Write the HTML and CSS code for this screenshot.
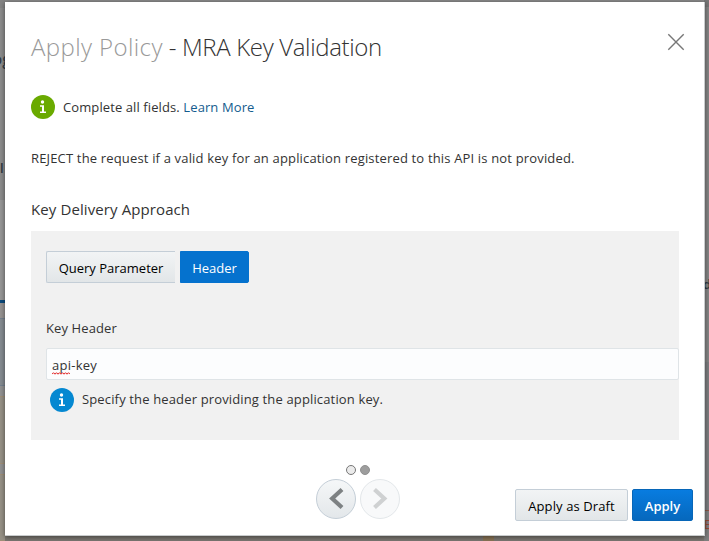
FILE: index.html
```html
<!DOCTYPE html>
<html lang="en">
<head>
<meta charset="utf-8">
<title>Apply Policy</title>
<link rel="stylesheet" href="styles.css">
</head>
<body>
<div class="page">
  <div class="rail rail-left">
    <div class="band top"></div><div class="band head"></div><div class="band upper"></div><div class="band line"></div>
    <div class="band gap"></div><div class="band blue"></div><div class="band gap2"></div><div class="band sand"></div><div class="band gap3"></div><div class="band sand last"></div>
  </div>
  <div class="floor"><span class="floor-accent"></span></div>
  <div class="rail rail-right"><div class="right-top"></div><div class="right-mid"></div><div class="right-low"></div><div class="right-end"></div></div>
</div>
<span class="behind og">og</span>
<span class="behind ol">ol</span>
<span class="behind dd">d</span>
<span class="behind ee">E</span>
<main class="dialog">
  <header class="head-row">
    <h1 class="title"><span class="muted">Apply Policy</span> <span class="name">- MRA Key Validation</span></h1>
    <svg class="close" width="18" height="18" viewBox="0 0 18 18"><path d="M1.3 1.3 16.7 16.7M16.7 1.3 1.3 16.7" stroke="#777" stroke-width="1.4" fill="none"/></svg>
  </header>
  <div class="notice">
    <svg width="24" height="24" viewBox="0 0 24 24"><circle cx="12" cy="12" r="12" fill="#6aaa00"/><circle cx="11.5" cy="7" r="1.7" fill="#fff"/><path d="M9 10.2h4v6.2h2V18H9v-1.6h2v-4.6H9z" fill="#fff"/></svg>
    <p class="notice-text">Complete all fields. <a class="link">Learn More</a></p>
  </div>
  <p class="description">REJECT the request if a valid key for an application registered to this API is not provided.</p>
  <h2 class="section-title">Key Delivery Approach</h2>
  <section class="panel">
    <div class="toggle">
      <button class="btn query">Query Parameter</button>
      <button class="btn selected">Header</button>
    </div>
    <label class="label">Key Header</label>
    <div class="input"><span class="misspelled">api<svg class="squiggle" width="18" height="3" viewBox="0 0 18 3"><path d="M0 2.2 1.5.7 3 2.2 4.5.7 6 2.2 7.5.7 9 2.2 10.5.7 12 2.2 13.5.7 15 2.2 16.5.7 18 2.2" fill="none" stroke="#e01818"/></svg></span><span>-key</span></div>
    <div class="hint">
      <svg width="24" height="24" viewBox="0 0 24 24"><circle cx="12" cy="12" r="12" fill="#0588d1"/><circle cx="11.5" cy="7" r="1.7" fill="#fff"/><path d="M9 10.2h4v6.2h2V18H9v-1.6h2v-4.6H9z" fill="#fff"/></svg>
      <p class="hint-text">Specify the header providing the application key.</p>
    </div>
  </section>
  <footer class="footer">
    <div class="pager">
      <div class="dots"><i class="dot"></i><i class="dot on"></i></div>
      <div class="arrows">
        <span class="arrow"><svg width="38" height="38" viewBox="0 0 38 38"><path d="M25 9.5 15.2 18.5 25 27.5" fill="none" stroke="#7d8183" stroke-width="4.2"/></svg></span>
        <span class="arrow off"><svg width="38" height="38" viewBox="0 0 38 38"><path d="M13.5 9.5 23.3 18.5 13.5 27.5" fill="none" stroke="#cfd1d2" stroke-width="4.2"/></svg></span>
      </div>
    </div>
    <div class="actions">
      <button class="btn draft">Apply as Draft</button>
      <button class="btn apply">Apply</button>
    </div>
  </footer>
</main>
</body>
</html>
```
FILE: styles.css
```css
* { box-sizing: border-box; }
body { margin: 0; width: 709px; height: 541px; overflow: hidden; background: #8b8b8b; font-family: "Open Sans", "Noto Sans", sans-serif; font-size: 13px; color: #333; }
h1, h2, p { margin: 0; font-weight: 400; white-space: nowrap; }
.page { display: grid; grid-template-columns: 5px 1fr 5px; height: 541px; }
.rail { display: flex; flex-direction: column; }
.band { flex: none; }
.top { height: 8px; background: #858585; }
.head { height: 192px; background: #8c8c8c; }
.upper { height: 100px; background: #969696; }
.line { height: 3px; background: #0b4a7c; }
.gap { height: 15px; background: #969392; }
.blue { height: 68px; background: #858b91; border: solid #74818f; border-width: 1px 0; }
.gap2 { height: 10px; background: #929292; }
.sand { height: 68px; background: #969186; border: solid #a08f78; border-width: 1px 0; }
.gap3 { height: 10px; background: #929292; }
.last { height: 67px; }
.floor { align-self: end; height: 5px; background: #7b7771; display: flex; justify-content: flex-end; padding-right: 210px; }
.floor-accent { width: 11px; background: #887356; }
.right-top { height: 7px; background: #777; }
.right-mid { height: 355px; background: #858585; }
.right-low { height: 149px; background: #7e7e80; border-bottom: 1px solid #8b5948; }
.right-end { flex: 1; background: #808080; }
.behind { position: absolute; color: #303942; line-height: 20px; }
.og { left: -8px; top: 49px; font-size: 17px; }
.ol { left: -8px; top: 158px; font-weight: 600; }
.dd { left: 703px; top: 274px; font-weight: 600; }
.ee { left: 704px; top: 514px; color: #984b35; }
.dialog { position: absolute; left: 5px; top: 2px; width: 700px; height: 534px; padding: 0 12px 0 26px; background: #fff; border: solid #c9cccd; border-width: 0 1px 1px 0; box-shadow: 0 1px 5px rgba(0,0,0,.5); display: flex; flex-direction: column; }
.head-row { display: flex; justify-content: space-between; padding: 27px 7px 0 0; height: 93px; }
.title { font-size: 24px; line-height: 36px; font-weight: 300; letter-spacing: -.35px; }
.muted { color: #999; letter-spacing: .4px; }
.close { margin-top: 4px; }
.notice { display: flex; align-items: center; gap: 8px; height: 24px; letter-spacing: .1px; }
.link { color: #145c8e; }
.description { margin-top: 27px; line-height: 24px; letter-spacing: .165px; }
.section-title { margin-top: 27px; font-size: 15px; line-height: 24px; letter-spacing: .1px; }
.panel { margin-top: 10px; width: 648px; height: 209px; background: #f1f1f1; padding: 20px 0 0 15px; display: flex; flex-direction: column; }
.toggle { display: flex; gap: 5px; }
.btn { height: 32px; padding: 2px 0 0; font: inherit; color: #000; border: 1px solid #c4ced7; border-radius: 2px; background: linear-gradient(#f2f4f5, #e2e6e8); white-space: nowrap; }
.query { width: 129px; border-right: 0; border-radius: 2px 0 0 2px; }
.selected { width: 69px; color: #fff; background: #0572ce; border-color: #0572ce; border-radius: 0 2px 2px 0; }
.label { margin-top: 33px; line-height: 24px; letter-spacing: .1px; }
.input { margin-top: 8px; height: 32px; border: 1px solid #dfe4e7; border-radius: 2px; background: #fcfdfe; padding: 4px 0 0 5px; line-height: 24px; letter-spacing: .25px; }
.misspelled { position: relative; display: inline-block; }
.squiggle { position: absolute; left: 0; top: 19px; }
.hint { display: flex; align-items: center; gap: 8px; margin: 8px 0 0 4px; letter-spacing: .145px; }
.hint-text { padding-bottom: 2px; }
.footer { margin-top: 25px; width: 662px; display: flex; justify-content: space-between; align-items: flex-start; }
.pager { padding-left: 285px; }
.dots { display: flex; gap: 4px; padding-left: 30px; }
.dot { width: 10px; height: 10px; border: 1px solid #777; border-radius: 50%; background: #ebebeb; }
.on { background: #9d9d9d; border-color: #909090; }
.arrows { display: flex; gap: 4px; margin-top: 4px; }
.arrow { width: 40px; height: 40px; border: 1px solid #c4ced7; border-radius: 50%; background: linear-gradient(#f5f7f8, #e3e7ea); }
.arrow svg { display: block; }
.off { border-color: #e3e7ea; background: #f8f9fa; }
.actions { display: flex; gap: 4px; padding-top: 24px; }
.draft { width: 113px; letter-spacing: .1px; }
.apply { width: 61px; color: #fff; font-weight: 600; border-color: #0766b8; background: linear-gradient(#087ce0, #0668bd); }
```
